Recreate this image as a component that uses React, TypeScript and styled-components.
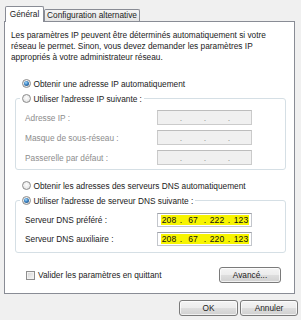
import React from "react";
import styled, { createGlobalStyle } from "styled-components";

const Global = createGlobalStyle`
  html, body { margin: 0; padding: 0; background: #f0f0f0; }
  body {
    font-family: "Liberation Sans", Arial, sans-serif;
    font-size: 8.3px;
    color: #1b1b1b;
  }
  * { box-sizing: border-box; }
`;

const Window = styled.div`
  width: 301px;
  height: 320px;
  padding: 6px 0 0 4px;
  display: flex;
  flex-direction: column;
  background: #f0f0f0;
  overflow: hidden;
`;

const TabRow = styled.div`
  display: flex;
  align-items: flex-end;
  height: 15px;
  padding-left: 1px;
`;

const Tab = styled.div<{ $active?: boolean; $w: number }>`
  width: ${(p) => p.$w}px;
  height: ${(p) => (p.$active ? 16 : 12)}px;
  margin-bottom: ${(p) => (p.$active ? -1 : 0)}px;
  position: relative;
  z-index: ${(p) => (p.$active ? 1 : 0)};
  border: 1px solid #898c95;
  border-bottom: none;
  border-radius: 2px 2px 0 0;
  background: ${(p) => (p.$active ? "#fff" : "linear-gradient(#f4f4f4, #e4e4e4)")};
  display: flex;
  align-items: center;
  justify-content: center;
  white-space: nowrap;
  line-height: 1;
`;

const Panel = styled.div`
  width: 291px;
  height: 273px;
  border: 1px solid #898c95;
  background: #fff;
  display: flex;
  flex-direction: column;
`;

const Description = styled.p`
  margin: 8px 0 0 6px;
  line-height: 11px;
  white-space: nowrap;
`;

const OptionRow = styled.label<{ $mt: number }>`
  display: flex;
  align-items: center;
  gap: 2.5px;
  height: 13px;
  margin: ${(p) => p.$mt}px 0 0 17px;
  white-space: nowrap;
`;

const RadioCircle = styled.span`
  flex: none;
  width: 9px;
  height: 9px;
  border-radius: 50%;
  border: 1px solid #8c8c8c;
  background: radial-gradient(circle at 50% 40%, #fdfdfd 0%, #e8e8e8 65%, #cfcfcf 100%);
  display: flex;
  align-items: center;
  justify-content: center;
`;

const RadioDot = styled.span`
  width: 5px;
  height: 5px;
  border-radius: 50%;
  background: radial-gradient(circle at 40% 35%, #a6dcff 0%, #3a82c2 45%, #17406a 100%);
`;

const Group = styled.fieldset<{ $mt: number; $pb: number }>`
  margin: ${(p) => p.$mt}px 8px 0 10px;
  padding: 0 0 ${(p) => p.$pb}px 0;
  border: 1px solid #d5dfe5;
  border-radius: 3px;
  min-width: 0;
`;

const Legend = styled.legend`
  margin-left: 4px;
  padding: 0 2px;
  height: 13px;
`;

const LegendInner = styled.span`
  display: inline-flex;
  align-items: center;
  gap: 2.5px;
  height: 13px;
  white-space: nowrap;
`;

const FieldGrid = styled.div<{ $rowH: number; $gap: number; $mt: number }>`
  display: grid;
  grid-template-columns: 132px 95px;
  grid-auto-rows: ${(p) => p.$rowH}px;
  row-gap: ${(p) => p.$gap}px;
  margin-top: ${(p) => p.$mt}px;
  padding-left: 9px;
  align-items: center;
`;

const FieldLabel = styled.span<{ $disabled?: boolean }>`
  color: ${(p) => (p.$disabled ? "#8d8d8d" : "#1b1b1b")};
  white-space: nowrap;
`;

const IpBox = styled.div<{ $disabled?: boolean }>`
  height: 100%;
  border: 1px solid ${(p) => (p.$disabled ? "#cbcbcb" : "#c3c6cc")};
  border-top-color: ${(p) => (p.$disabled ? "#bdbdbd" : "#9ea1a8")};
  background: ${(p) => (p.$disabled ? "#f0f0f0" : "#fff")};
  display: flex;
  align-items: stretch;
  padding: 1px 2px 1px 3px;
`;

const IpInner = styled.div<{ $mark?: boolean }>`
  flex: 1;
  display: grid;
  grid-template-columns: 16px 8px 16px 8px 16px 8px 16px;
  align-items: center;
  justify-items: center;
  background: ${(p) => (p.$mark ? "#f7f400" : "transparent")};
  font-size: 8.6px;
  color: #111;
`;

const Dot = styled.span<{ $disabled?: boolean }>`
  color: ${(p) => (p.$disabled ? "#9a9a9a" : "#111")};
`;

const BottomRow = styled.div`
  display: flex;
  align-items: center;
  justify-content: space-between;
  height: 16px;
  margin: 14px 13px 0 21px;
`;

const CheckLabel = styled.label`
  display: flex;
  align-items: center;
  gap: 3px;
  white-space: nowrap;
`;

const CheckBox = styled.span`
  flex: none;
  width: 9px;
  height: 9px;
  border: 1px solid #8f8f8f;
  background: linear-gradient(135deg, #d3d3d3, #f8f8f8);
  box-shadow: inset 0 0 0 1px #f2f2f2;
`;

const Button = styled.button<{ $w: number }>`
  width: ${(p) => p.$w}px;
  height: 16px;
  padding: 0;
  border: 1px solid #7a7a7a;
  border-radius: 3px;
  background: linear-gradient(#f4f4f4 0%, #ececec 50%, #dedede 51%, #d0d0d0 100%);
  box-shadow: inset 0 0 0 1px rgba(255, 255, 255, 0.7);
  font: inherit;
  color: #1b1b1b;
`;

const Footer = styled.div`
  display: flex;
  justify-content: flex-end;
  gap: 2px;
  margin-top: 6px;
  padding-right: 3px;
`;

function Radio({ checked }: { checked?: boolean }) {
  return <RadioCircle>{checked && <RadioDot />}</RadioCircle>;
}

function IpField({ value, disabled, mark }: { value?: string[]; disabled?: boolean; mark?: boolean }) {
  const v = value ?? ["", "", "", ""];
  return (
    <IpBox $disabled={disabled}>
      <IpInner $mark={mark}>
        <span>{v[0]}</span>
        <Dot $disabled={disabled}>.</Dot>
        <span>{v[1]}</span>
        <Dot $disabled={disabled}>.</Dot>
        <span>{v[2]}</span>
        <Dot $disabled={disabled}>.</Dot>
        <span>{v[3]}</span>
      </IpInner>
    </IpBox>
  );
}

export default function App() {
  return (
    <>
      <Global />
      <Window>
        <TabRow>
          <Tab $active $w={39}>Général</Tab>
          <Tab $w={96}>Configuration alternative</Tab>
        </TabRow>
        <Panel>
          <Description>
            Les paramètres IP peuvent être déterminés automatiquement si votre
            <br />
            réseau le permet. Sinon, vous devez demander les paramètres IP
            <br />
            appropriés à votre administrateur réseau.
          </Description>

          <OptionRow $mt={14}>
            <Radio checked />
            <span>Obtenir une adresse IP automatiquement</span>
          </OptionRow>

          <Group $mt={2} $pb={4}>
            <Legend>
              <LegendInner>
                <Radio />
                <span>Utiliser l'adresse IP suivante :</span>
              </LegendInner>
            </Legend>
            <FieldGrid $rowH={15} $gap={5} $mt={5}>
              <FieldLabel $disabled>Adresse IP :</FieldLabel>
              <IpField disabled />
              <FieldLabel $disabled>Masque de sous-réseau :</FieldLabel>
              <IpField disabled />
              <FieldLabel $disabled>Passerelle par défaut :</FieldLabel>
              <IpField disabled />
            </FieldGrid>
          </Group>

          <OptionRow $mt={9}>
            <Radio />
            <span>Obtenir les adresses des serveurs DNS automatiquement</span>
          </OptionRow>

          <Group $mt={2} $pb={6}>
            <Legend>
              <LegendInner>
                <Radio checked />
                <span>Utiliser l'adresse de serveur DNS suivante :</span>
              </LegendInner>
            </Legend>
            <FieldGrid $rowH={14} $gap={5} $mt={6}>
              <FieldLabel>Serveur DNS préféré :</FieldLabel>
              <IpField value={["208", "67", "222", "123"]} mark />
              <FieldLabel>Serveur DNS auxiliaire :</FieldLabel>
              <IpField value={["208", "67", "220", "123"]} mark />
            </FieldGrid>
          </Group>

          <BottomRow>
            <CheckLabel>
              <CheckBox />
              <span>Valider les paramètres en quittant</span>
            </CheckLabel>
            <Button $w={62}>Avancé...</Button>
          </BottomRow>
        </Panel>
        <Footer>
          <Button $w={59}>OK</Button>
          <Button $w={58}>Annuler</Button>
        </Footer>
      </Window>
    </>
  );
}
